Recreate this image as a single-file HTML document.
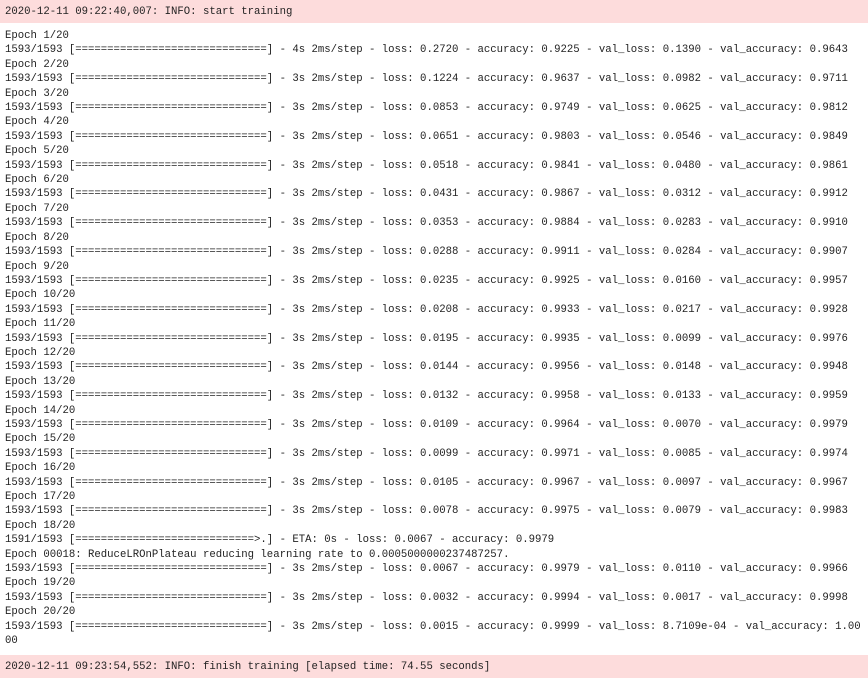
<!DOCTYPE html>
<html><head><meta charset="utf-8"><style>
html,body{margin:0;padding:0;width:868px;height:678px;background:#fff;overflow:hidden}
pre{margin:0;font-family:"Liberation Mono",monospace;font-size:10.65px;line-height:14.4px;color:#222;position:absolute;left:5px;white-space:pre}
.bar{position:absolute;left:0;width:868px;background:#fddcdc}
</style></head><body>
<div class="bar" style="top:0;height:23px"></div>
<div class="bar" style="top:655px;height:23px"></div>
<pre style="top:5px">2020-12-11 09:22:40,007: INFO: start training</pre>
<pre style="top:29px">Epoch 1/20
1593/1593 [==============================] - 4s 2ms/step - loss: 0.2720 - accuracy: 0.9225 - val_loss: 0.1390 - val_accuracy: 0.9643
Epoch 2/20
1593/1593 [==============================] - 3s 2ms/step - loss: 0.1224 - accuracy: 0.9637 - val_loss: 0.0982 - val_accuracy: 0.9711
Epoch 3/20
1593/1593 [==============================] - 3s 2ms/step - loss: 0.0853 - accuracy: 0.9749 - val_loss: 0.0625 - val_accuracy: 0.9812
Epoch 4/20
1593/1593 [==============================] - 3s 2ms/step - loss: 0.0651 - accuracy: 0.9803 - val_loss: 0.0546 - val_accuracy: 0.9849
Epoch 5/20
1593/1593 [==============================] - 3s 2ms/step - loss: 0.0518 - accuracy: 0.9841 - val_loss: 0.0480 - val_accuracy: 0.9861
Epoch 6/20
1593/1593 [==============================] - 3s 2ms/step - loss: 0.0431 - accuracy: 0.9867 - val_loss: 0.0312 - val_accuracy: 0.9912
Epoch 7/20
1593/1593 [==============================] - 3s 2ms/step - loss: 0.0353 - accuracy: 0.9884 - val_loss: 0.0283 - val_accuracy: 0.9910
Epoch 8/20
1593/1593 [==============================] - 3s 2ms/step - loss: 0.0288 - accuracy: 0.9911 - val_loss: 0.0284 - val_accuracy: 0.9907
Epoch 9/20
1593/1593 [==============================] - 3s 2ms/step - loss: 0.0235 - accuracy: 0.9925 - val_loss: 0.0160 - val_accuracy: 0.9957
Epoch 10/20
1593/1593 [==============================] - 3s 2ms/step - loss: 0.0208 - accuracy: 0.9933 - val_loss: 0.0217 - val_accuracy: 0.9928
Epoch 11/20
1593/1593 [==============================] - 3s 2ms/step - loss: 0.0195 - accuracy: 0.9935 - val_loss: 0.0099 - val_accuracy: 0.9976
Epoch 12/20
1593/1593 [==============================] - 3s 2ms/step - loss: 0.0144 - accuracy: 0.9956 - val_loss: 0.0148 - val_accuracy: 0.9948
Epoch 13/20
1593/1593 [==============================] - 3s 2ms/step - loss: 0.0132 - accuracy: 0.9958 - val_loss: 0.0133 - val_accuracy: 0.9959
Epoch 14/20
1593/1593 [==============================] - 3s 2ms/step - loss: 0.0109 - accuracy: 0.9964 - val_loss: 0.0070 - val_accuracy: 0.9979
Epoch 15/20
1593/1593 [==============================] - 3s 2ms/step - loss: 0.0099 - accuracy: 0.9971 - val_loss: 0.0085 - val_accuracy: 0.9974
Epoch 16/20
1593/1593 [==============================] - 3s 2ms/step - loss: 0.0105 - accuracy: 0.9967 - val_loss: 0.0097 - val_accuracy: 0.9967
Epoch 17/20
1593/1593 [==============================] - 3s 2ms/step - loss: 0.0078 - accuracy: 0.9975 - val_loss: 0.0079 - val_accuracy: 0.9983
Epoch 18/20
1591/1593 [============================>.] - ETA: 0s - loss: 0.0067 - accuracy: 0.9979
Epoch 00018: ReduceLROnPlateau reducing learning rate to 0.0005000000237487257.
1593/1593 [==============================] - 3s 2ms/step - loss: 0.0067 - accuracy: 0.9979 - val_loss: 0.0110 - val_accuracy: 0.9966
Epoch 19/20
1593/1593 [==============================] - 3s 2ms/step - loss: 0.0032 - accuracy: 0.9994 - val_loss: 0.0017 - val_accuracy: 0.9998
Epoch 20/20
1593/1593 [==============================] - 3s 2ms/step - loss: 0.0015 - accuracy: 0.9999 - val_loss: 8.7109e-04 - val_accuracy: 1.00
00</pre>
<pre style="top:660px">2020-12-11 09:23:54,552: INFO: finish training [elapsed time: 74.55 seconds]</pre>
</body></html>
